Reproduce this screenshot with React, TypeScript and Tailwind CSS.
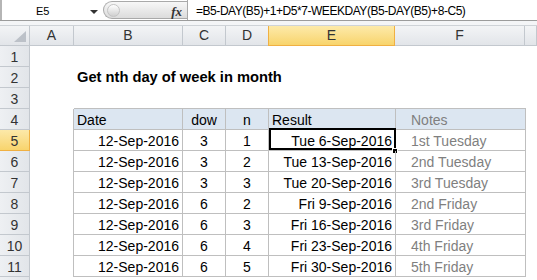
import React from "react";

const colW = ["w-[44px]", "w-[109px]", "w-[43px]", "w-[43px]", "w-[127px]", "w-[130px]", "flex-1"];
const letters = ["A", "B", "C", "D", "E", "F", ""];

const rows = [
  ["12-Sep-2016", "3", "1", "Tue 6-Sep-2016", "1st Tuesday"],
  ["12-Sep-2016", "3", "2", "Tue 13-Sep-2016", "2nd Tuesday"],
  ["12-Sep-2016", "3", "3", "Tue 20-Sep-2016", "3rd Tuesday"],
  ["12-Sep-2016", "6", "2", "Fri 9-Sep-2016", "2nd Friday"],
  ["12-Sep-2016", "6", "3", "Fri 16-Sep-2016", "3rd Friday"],
  ["12-Sep-2016", "6", "4", "Fri 23-Sep-2016", "4th Friday"],
  ["12-Sep-2016", "6", "5", "Fri 30-Sep-2016", "5th Friday"],
];

const RowHead = ({ n, active }: { n?: number; active?: boolean }) => (
  <div
    className={
      "w-[30px] shrink-0 h-full border-r border-b text-center text-[14px] leading-[22px] " +
      (active
        ? "bg-gradient-to-b from-[#fce9a9] to-[#f8d46c] border-[#f0b042] text-[#333]"
        : "bg-gradient-to-r from-[#eef0f3] to-[#e2e5e9] border-[#c3c8ce] text-[#333]")
    }
  >
    {n}
  </div>
);

const App = () => {
  const tableCell = "border-r border-b border-[#bfbfbf]";

  return (
    <div className="w-[537px] h-[280px] overflow-hidden bg-white font-['Liberation_Sans',Arial,sans-serif] text-black">
      {/* formula bar */}
      <div className="flex h-[21px] border-b border-[#9c9c9c]">
        <div className="w-[103px] shrink-0 relative border-l-2 border-[#b5b5b5]">
          <span className="absolute left-[34px] top-0 text-[11px] leading-[22px]">E5</span>
          <svg className="absolute left-[88px] top-[10px]" width="8" height="4" viewBox="0 0 8 4">
            <path d="M0 0H8L4 4Z" fill="#333" />
          </svg>
        </div>
        <div className="w-[84px] shrink-0 relative rounded-l-full border border-r-0 border-[#a9a9a9] bg-gradient-to-b from-[#f7f7f7] to-[#dcdcdc] mt-[1px] mb-[1px]">
          <div className="absolute left-[3px] top-[2px] w-[13px] h-[13px] rounded-full bg-gradient-to-b from-[#ffffff] to-[#d0d0d0] border border-[#c4c4c4]" />
          <span className="absolute right-[5px] top-0 font-['Liberation_Serif',serif] italic font-bold text-[13px] leading-[19px] text-[#333]">
            fx
          </span>
        </div>
        <div className="flex-1 border-l border-[#a9a9a9] pl-[8px] text-[12px] tracking-[-0.45px] leading-[23px] whitespace-nowrap">
          =B5-DAY(B5)+1+D5*7-WEEKDAY(B5-DAY(B5)+8-C5)
        </div>
      </div>
      <div className="h-[5px] border-b border-[#cfd3d8] bg-[#f4f5f7]" />

      {/* column headers */}
      <div className="flex h-[20px]">
        <div className="w-[30px] shrink-0 relative border-r border-b border-[#c3c8ce] bg-gradient-to-b from-[#f3f4f6] to-[#e2e5e9]">
          <svg className="absolute right-[3px] bottom-[3px]" width="12" height="11" viewBox="0 0 12 11">
            <path d="M12 0V11H0Z" fill="#bcc1c8" />
          </svg>
        </div>
        {letters.map((l, i) => (
          <div
            key={i}
            className={
              colW[i] +
              " shrink-0 border-r border-b text-center text-[14px] leading-[19px] text-[#333] " +
              (l === "E"
                ? "bg-gradient-to-b from-[#fdeaa9] to-[#f8d46b] border-[#f0b042] border-l -ml-[1px]"
                : "bg-gradient-to-b from-[#f3f4f6] to-[#e2e5e9] border-[#c3c8ce]")
            }
          >
            {l}
          </div>
        ))}
      </div>

      {/* rows 1-3 */}
      {[1, 2, 3].map((n) => (
        <div key={n} className="flex h-[21px]">
          <RowHead n={n} />
          <div className={colW[0] + " shrink-0"} />
          <div
            className={
              colW[1] +
              " shrink-0 relative " +
              (n === 3 ? "border-b border-[#bfbfbf]" : "")
            }
          >
            {n === 2 && (
              <span className="absolute left-[3px] top-0 whitespace-nowrap font-bold text-[14.7px] leading-[20px]">
                Get nth day of week in month
              </span>
            )}
          </div>
          {n === 3 &&
            [2, 3, 4, 5].map((c) => (
              <div key={c} className={colW[c] + " shrink-0 border-b border-[#bfbfbf]"} />
            ))}
        </div>
      ))}

      {/* row 4 header */}
      <div className="flex h-[21px] text-[14px] leading-[22px]">
        <RowHead n={4} />
        <div className={colW[0] + " shrink-0 border-r border-[#bfbfbf]"} />
        <div className={colW[1] + " shrink-0 bg-[#dce6f1] pl-[3px] " + tableCell}>Date</div>
        <div className={colW[2] + " shrink-0 bg-[#dce6f1] text-center " + tableCell}>dow</div>
        <div className={colW[3] + " shrink-0 bg-[#dce6f1] text-center " + tableCell}>n</div>
        <div className={colW[4] + " shrink-0 bg-[#dce6f1] pl-[3px] " + tableCell}>Result</div>
        <div className={colW[5] + " shrink-0 bg-[#dce6f1] pl-[15px] text-[#7f7f7f] " + tableCell}>Notes</div>
      </div>

      {/* data rows */}
      {rows.map((r, i) => (
        <div key={i} className="flex h-[21px] text-[14px] leading-[22px] whitespace-nowrap">
          <RowHead n={i + 5} active={i === 0} />
          <div className={colW[0] + " shrink-0 border-r border-[#bfbfbf]"} />
          <div className={colW[1] + " shrink-0 text-right pr-[3px] " + tableCell}>{r[0]}</div>
          <div className={colW[2] + " shrink-0 text-center " + tableCell}>{r[1]}</div>
          <div className={colW[3] + " shrink-0 text-center " + tableCell}>{r[2]}</div>
          <div className={colW[4] + " shrink-0 relative text-right pr-[3px] " + tableCell}>
            {r[3]}
            {i === 0 && (
              <>
                <div className="absolute left-0 -top-[2px] w-[127px] h-[22px] border-2 border-black" />
                <div className="absolute -right-[3px] -bottom-[4px] w-[6px] h-[6px] bg-black border border-white" />
              </>
            )}
          </div>
          <div className={colW[5] + " shrink-0 pl-[15px] text-[#7f7f7f] " + tableCell}>{r[4]}</div>
        </div>
      ))}

      <div className="flex h-[21px]">
        <RowHead />
      </div>
    </div>
  );
};

export default App;
